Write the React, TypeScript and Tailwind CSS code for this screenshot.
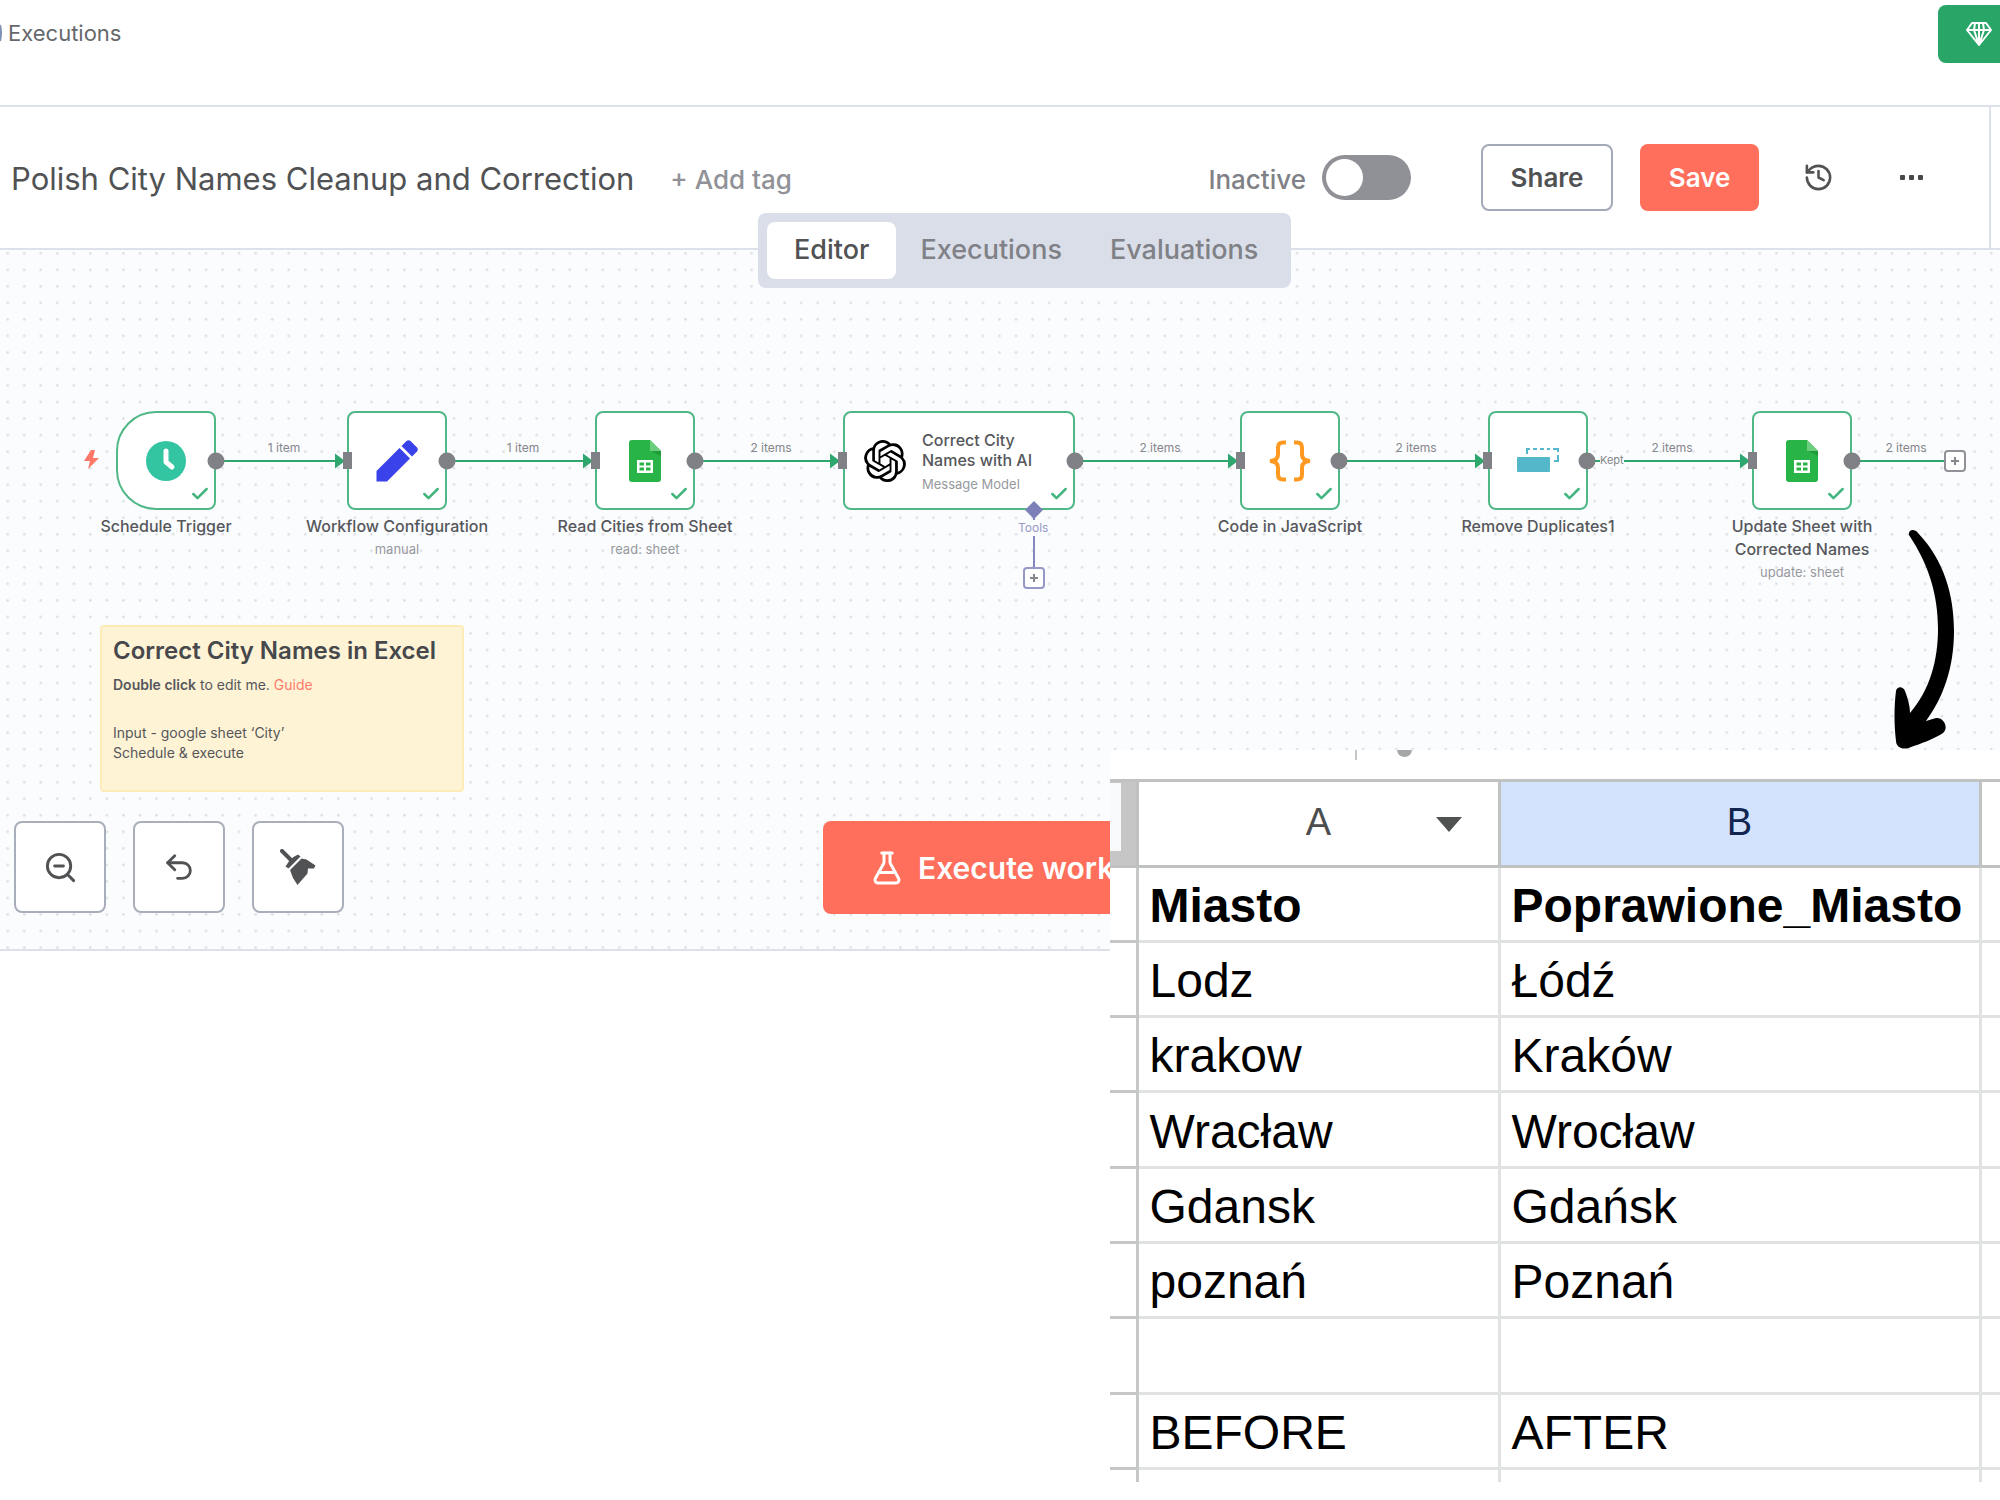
import type { ReactNode } from "react";
import { Check, FlaskConical, History, Undo2, ZoomOut } from "lucide-react";
import { SiOpenai } from "react-icons/si";

type FlowNode = {
  id: string;
  x: number;
  name: string;
  detail?: string;
  trigger?: boolean;
  icon: ReactNode;
};

type Edge = { from: number; to: number; label: string; labelX: number };

function ClockIcon() {
  return (
    <svg width="42" height="42" viewBox="0 0 42 42" aria-hidden="true">
      <circle cx="21" cy="21" r="20" fill="#33c4a1" />
      <path d="M21 11v11l6 5" fill="none" stroke="#fff" strokeWidth="5" strokeLinecap="round" strokeLinejoin="round" />
    </svg>
  );
}

function PencilIcon() {
  return (
    <svg width="42" height="42" viewBox="0 0 42 42" aria-hidden="true" fill="#3a42e9">
      <path d="M.5 41.500V31L23.500 8 34 18.500 11 41.500z" />
      <path d="M25.500 6l5-5q2-1.500 4 0l6.500 6.500q1.500 2 0 4l-5 5z" />
    </svg>
  );
}

function SheetsIcon() {
  return (
    <svg width="32" height="42" viewBox="0 0 32 42" aria-hidden="true">
      <path d="M3 0h18l11 11v28a3 3 0 0 1-3 3H3a3 3 0 0 1-3-3V3a3 3 0 0 1 3-3z" fill="#28b446" />
      <path d="M21 0l11 11H21z" fill="#6ace7c" />
      <path d="M22 11h10v5z" fill="#219b3a" />
      <rect x="8" y="20" width="16" height="13" fill="#fff" />
      <path d="M10.500 22.500h4.500v3h-4.500zM17 22.500h4.500v3H17zM10.500 27.500h4.500v3h-4.500zM17 27.500h4.500v3H17z" fill="#28b446" />
    </svg>
  );
}

function BracesIcon() {
  return (
    <svg width="42" height="42" viewBox="0 0 42 42" aria-hidden="true" fill="none" stroke="#ff9922" strokeWidth="4">
      <path d="M17 2.500h-3q-5 0-5 5v7q0 6-8 6.500 8 .5 8 6.500v7q0 5 5 5h3" />
      <path d="M25 2.500h3q5 0 5 5v7q0 6 8 6.500-8 .5-8 6.500v7q0 5-5 5h-3" />
    </svg>
  );
}

function DuplicatesIcon() {
  return (
    <svg width="42" height="42" viewBox="0 0 42 42" aria-hidden="true">
      <rect x="0" y="17" width="33" height="15" rx="1" fill="#55b7ca" />
      <path d="M10 14v-5h3M16 9h4M23 9h4M30 9h3M36 9h5v3M41 15v6h-4" fill="none" stroke="#55b7ca" strokeWidth="2" />
    </svg>
  );
}

function GemIcon() {
  return (
    <svg width="26" height="26" viewBox="0 0 26 26" aria-hidden="true" fill="none" stroke="#fff" strokeWidth="2" strokeLinejoin="round">
      <path d="M6 2h14l5 7-12 15L1 9zM1 9h24M9 2L8 9l5 15 5-15-1-7M13 2v22" />
    </svg>
  );
}

function MoreIcon() {
  return (
    <svg width="31" height="31" viewBox="0 0 31 31" aria-hidden="true" fill="#46484a">
      <rect x="4" y="13" width="5" height="5" rx="1" />
      <rect x="13" y="13" width="5" height="5" rx="1" />
      <rect x="22" y="13" width="5" height="5" rx="1" />
    </svg>
  );
}

function BroomIcon() {
  return (
    <svg width="36" height="37" viewBox="0 0 36 37" aria-hidden="true" fill="#505254">
      <path d="M2 2l10 10" stroke="#505254" strokeWidth="4" strokeLinecap="round" />
      <path d="M5.500 17.500l4-6 4-3.500 4.500-2.500 2.500 2L8.500 19.500z" />
      <path d="M10 21L21.500 9.500l5 1L35.500 16.500 34 19.500l-6 0-.5 5L17.500 36l-4.500-7z" />
    </svg>
  );
}

const nodes: FlowNode[] = [
  { id: "trigger", x: 116, name: "Schedule Trigger", trigger: true, icon: <ClockIcon /> },
  { id: "config", x: 347, name: "Workflow Configuration", detail: "manual", icon: <PencilIcon /> },
  { id: "read", x: 595, name: "Read Cities from Sheet", detail: "read: sheet", icon: <SheetsIcon /> },
  { id: "code", x: 1240, name: "Code in JavaScript", icon: <BracesIcon /> },
  { id: "dedupe", x: 1488, name: "Remove Duplicates1", icon: <DuplicatesIcon /> },
  { id: "update", x: 1752, name: "Update Sheet with Corrected Names", detail: "update: sheet", icon: <SheetsIcon /> },
];

const edges: Edge[] = [
  { from: 216, to: 343, label: "1 item", labelX: 284 },
  { from: 447, to: 591, label: "1 item", labelX: 523 },
  { from: 695, to: 838, label: "2 items", labelX: 771 },
  { from: 1075, to: 1236, label: "2 items", labelX: 1160 },
  { from: 1339, to: 1483, label: "2 items", labelX: 1416 },
  { from: 1587, to: 1748, label: "2 items", labelX: 1672 },
];

const rows = [
  ["Lodz", "Łódź"],
  ["krakow", "Kraków"],
  ["Wracław", "Wrocław"],
  ["Gdansk", "Gdańsk"],
  ["poznań", "Poznań"],
  ["", ""],
  ["BEFORE", "AFTER"],
];

function SuccessMark() {
  return <Check className="absolute right-1 bottom-1 size-5 text-[#45b57f]" strokeWidth={3} aria-hidden="true" />;
}

function NodeCard({ node }: { node: FlowNode }) {
  return (
    <div className="absolute top-[161px] flex w-[100px] flex-col items-center" style={{ left: node.x }}>
      <div
        className={
          node.trigger
            ? "relative flex h-[99px] w-[100px] items-center justify-center rounded-l-[40px] rounded-r-lg border-2 border-[#4fb886] bg-white"
            : "relative flex h-[99px] w-[100px] items-center justify-center rounded-lg border-2 border-[#4fb886] bg-white"
        }
      >
        {node.icon}
        <SuccessMark />
      </div>
      <div className="mt-[5px] w-48 text-center text-base leading-[23px] font-medium text-[#55575b]">{node.name}</div>
      {node.detail && <div className="w-48 text-center text-[13px] leading-[23px] text-[#97999e]">{node.detail}</div>}
    </div>
  );
}

function EdgeLabel({ x, children }: { x: number; children: ReactNode }) {
  return (
    <span
      className="absolute top-[190px] w-16 -translate-x-1/2 text-center text-xs leading-4 text-[#85878c]"
      style={{ left: x }}
    >
      {children}
    </span>
  );
}

function Connections() {
  return (
    <svg className="absolute inset-0 size-full" aria-hidden="true">
      <g stroke="#2fa66d" strokeWidth="2">
        {edges.map((e) => (
          <path key={e.from} d={`M${e.from} 211H${e.to}`} />
        ))}
        <path d="M1852 211H1945" />
      </g>
      <path d="M1034 260v58" stroke="#8587bf" strokeWidth="2" />
    </svg>
  );
}

function Ports() {
  return (
    <svg className="pointer-events-none absolute inset-0 size-full" aria-hidden="true">
      {edges.map((e) => (
        <g key={e.from}>
          <circle cx={e.from} cy="211" r="8.500" fill="#7f8186" />
          <path d={`M${e.to - 8} 203.500l10 7.500-10 7.500z`} fill="#2fa66d" />
          <rect x={e.to} y="202" width="9" height="17" fill="#7f8186" />
        </g>
      ))}
      <circle cx="1852" cy="211" r="8.500" fill="#7f8186" />
      <path d="M1034 251l9 9-9 9-9-9z" fill="#7d80b8" />
      <path d="M91 200l-7 11h6l-2 8 11-11h-6l2-8z" fill="#ff7766" />
    </svg>
  );
}

function Canvas() {
  return (
    <main className="relative h-[701px] overflow-hidden border-b-2 border-[#dde1ea] bg-[#fbfcfe]">
      <svg className="absolute inset-0 size-full" aria-hidden="true">
        <defs>
          <pattern id="dots" x="-0.500" y="-4.900" width="16.530" height="16.530" patternUnits="userSpaceOnUse">
            <circle cx="8.200" cy="8.200" r="1.300" fill="#dcdee3" />
          </pattern>
        </defs>
        <rect width="100%" height="100%" fill="url(#dots)" />
      </svg>

      <Connections />
      {nodes.map((n) => (
        <NodeCard key={n.id} node={n} />
      ))}

      <div className="absolute top-[161px] left-[843px] flex h-[99px] w-[232px] items-center gap-4 rounded-lg border-2 border-[#4fb886] bg-white pl-[19px]">
        <SiOpenai className="size-[42px] shrink-0 text-black" aria-hidden="true" />
        <div className="pt-0.5">
          <div className="text-base leading-5 font-medium text-[#55575b]">
            Correct City
            <br />
            Names with AI
          </div>
          <div className="mt-1 text-[13px] leading-5 text-[#97999e]">Message Model</div>
        </div>
        <SuccessMark />
      </div>
      <Ports />

      {edges.map((e) => (
        <EdgeLabel key={e.from} x={e.labelX}>
          {e.label}
        </EdgeLabel>
      ))}
      <EdgeLabel x={1906}>2 items</EdgeLabel>
      <span className="absolute top-[202px] left-[1600px] bg-[#fbfcfe] text-[11px] leading-4 text-[#85878c]">Kept</span>
      <span className="absolute top-[270px] left-[1018px] bg-[#fbfcfe] text-xs leading-4 text-[#9698c8]">Tools</span>

      <button
        type="button"
        aria-label="Add tool"
        className="absolute top-[317px] left-[1023px] flex size-[22px] items-center justify-center rounded border-2 border-[#9698c8] bg-white"
      >
        <svg width="10" height="10" viewBox="0 0 10 10" stroke="#85878c" strokeWidth="2" aria-hidden="true">
          <path d="M5 1v8M1 5h8" />
        </svg>
      </button>
      <button
        type="button"
        aria-label="Add node"
        className="absolute top-[200px] left-[1944px] flex size-[22px] items-center justify-center rounded border-2 border-[#909297] bg-white"
      >
        <svg width="10" height="10" viewBox="0 0 10 10" stroke="#85878c" strokeWidth="2" aria-hidden="true">
          <path d="M5 1v8M1 5h8" />
        </svg>
      </button>

      <section className="absolute top-[375px] left-[100px] h-[167px] w-[364px] rounded border-2 border-[#fdebb8] bg-[#fff3d5] px-[11px] pt-2 text-sm leading-5 text-[#55575b]">
        <h2 className="text-2xl leading-8 font-semibold whitespace-nowrap text-[#46484c]">Correct City Names in Excel</h2>
        <p className="mt-2">
          <strong className="font-semibold">Double click</strong> to edit me.{" "}
          <a href="#guide" className="text-[#ff7b6b]">
            Guide
          </a>
        </p>
        <p className="mt-7">
          Input - google sheet ‘City’
          <br />
          Schedule &amp; execute
        </p>
      </section>

      <div className="absolute bottom-9 left-[14px] flex gap-[27px]">
        <ControlButton label="Zoom out">
          <ZoomOut size={35} strokeWidth={2} />
        </ControlButton>
        <ControlButton label="Undo">
          <Undo2 size={34} strokeWidth={2} />
        </ControlButton>
        <ControlButton label="Tidy up">
          <BroomIcon />
        </ControlButton>
      </div>

      <button
        type="button"
        className="absolute bottom-[35px] left-[823px] flex h-[93px] items-center gap-[13px] rounded-lg bg-[#ff6f5c] px-[46px] text-3xl font-semibold whitespace-nowrap text-white"
      >
        <FlaskConical size={36} strokeWidth={2} aria-hidden="true" />
        Execute workflow
      </button>
    </main>
  );
}

function ControlButton({ label, children }: { label: string; children: ReactNode }) {
  return (
    <button
      type="button"
      aria-label={label}
      className="flex size-[92px] items-center justify-center rounded-lg border-2 border-[#a9aebb] bg-white text-[#505254]"
    >
      {children}
    </button>
  );
}

function Sheet() {
  return (
    <section className="absolute top-[750px] right-0 h-[732px] w-[890px] overflow-hidden bg-white font-['Liberation_Sans',Arial,sans-serif]">
      <svg className="block h-[29px] w-full" aria-hidden="true">
        <path d="M246 0v10" stroke="#c4c6c7" strokeWidth="2" />
        <path d="M287 0h15q-1 7-7.500 7T287 0z" fill="#a5a7a7" />
      </svg>
      <table className="w-full table-fixed border-collapse text-left text-5xl text-black">
        <colgroup>
          <col className="w-[27px]" />
          <col className="w-[362px]" />
          <col className="w-[481px]" />
          <col />
        </colgroup>
        <thead>
          <tr className="h-[86px] border-y-3 border-[#c0c2c2] text-[38px]">
            <th className="border-r-3 border-[#c0c2c2] bg-[#c6c6c6] p-0">
              <div className="mb-3.5 h-[68px] w-[11px] bg-[#f8f9fa]" />
            </th>
            <th scope="col" className="border-r-3 border-[#c0c2c2] p-0 pb-1 leading-none font-normal text-[#4b4e4d]">
              <div className="flex items-center justify-end pr-9">
                <span className="w-7 text-center">A</span>
                <button type="button" aria-label="Column A menu" className="ml-[103px] pt-1">
                  <svg width="26" height="16" viewBox="0 0 26 16" fill="#505252" aria-hidden="true">
                    <path d="M0 1h26L13 16z" />
                  </svg>
                </button>
              </div>
            </th>
            <th scope="col" className="border-r-3 border-[#c0c2c2] bg-[#d3e2fd] p-0 pb-1 text-center leading-none font-normal text-[#10254f]">
              B
            </th>
            <th className="p-0" />
          </tr>
          <tr className="h-[75px] border-b-3 border-[#e1e2e2]">
            <td className="border-r-3 border-b-3 border-[#c6c8c8] p-0" />
            <th scope="col" className="border-r-3 border-[#e1e2e2] pt-1 pr-0 pb-0 pl-[11px] leading-[68px] font-bold">
              Miasto
            </th>
            <th scope="col" className="border-r-3 border-[#e1e2e2] pt-1 pr-0 pb-0 pl-[11px] leading-[68px] font-bold">
              Poprawione_Miasto
            </th>
            <td />
          </tr>
        </thead>
        <tbody>
          {rows.map(([before, after], i) => (
            <tr key={i} className="h-[75px] border-b-3 border-[#e1e2e2] nth-[3n]:h-[76px]">
              <td className="border-r-3 border-b-3 border-[#c6c8c8] p-0" />
              <td className="border-r-3 border-[#e1e2e2] pt-1 pr-0 pb-0 pl-[11px] leading-[68px]">{before}</td>
              <td className="border-r-3 border-[#e1e2e2] pt-1 pr-0 pb-0 pl-[11px] leading-[68px]">{after}</td>
              <td />
            </tr>
          ))}
          <tr className="h-[75px]">
            <td className="border-r-3 border-[#c6c8c8] p-0" />
            <td className="border-r-3 border-[#e1e2e2]" />
            <td className="border-r-3 border-[#e1e2e2]" />
            <td />
          </tr>
        </tbody>
      </table>
    </section>
  );
}

export default function App() {
  return (
    <div className="relative min-h-screen overflow-hidden bg-white font-[Inter,sans-serif] text-[#505254]">
      <nav className="flex h-[107px] items-start justify-between border-b-2 border-[#dde1ea]">
        <a href="#executions" className="flex h-[66px] items-center gap-1.5 text-[22px] text-[#66686c]">
          <svg width="2" height="20" viewBox="0 0 2 20" fill="none" stroke="#7d90b5" strokeWidth="2" aria-hidden="true">
            <path d="M0 2q2 8 0 16" />
          </svg>
          Executions
        </a>
        <button type="button" aria-label="Upgrade" className="mt-[5px] flex h-[58px] w-[62px] items-center rounded-l-lg bg-[#2aa568] pl-7">
          <GemIcon />
        </button>
      </nav>

      <header className="flex h-[143px] border-b-2 border-[#dde1ea]">
        <div className="flex grow items-center border-r-2 border-[#dde1ea] pr-[62px] pl-[11px]">
          <h1 className="pt-1 text-[31px] whitespace-nowrap">Polish City Names Cleanup and Correction</h1>
          <button type="button" className="ml-9 pt-1 text-[26px] font-medium whitespace-nowrap text-[#909298]">
            + Add tag
          </button>
          <div className="ml-auto flex items-center">
            <label htmlFor="active" className="pt-1 text-[26px] font-medium text-[#7f8186]">
              Inactive
            </label>
            <input
              id="active"
              type="checkbox"
              role="switch"
              className="ml-4 h-[45px] w-[89px] appearance-none rounded-full bg-[#909197] p-1 before:block before:size-[37px] before:rounded-full before:bg-white"
            />
            <button type="button" className="ml-[70px] h-[67px] w-[132px] rounded-lg border-2 border-[#a3a9b7] text-[26px] font-semibold">
              Share
            </button>
            <button type="button" className="ml-[27px] h-[67px] w-[119px] rounded-lg bg-[#ff6f5c] text-[26px] font-semibold text-white">
              Save
            </button>
            <button type="button" aria-label="Version history" className="ml-11">
              <History size={31} strokeWidth={2} />
            </button>
            <button type="button" aria-label="More options" className="ml-[62px]">
              <MoreIcon />
            </button>
          </div>
        </div>
        <div className="w-[9px]" />
      </header>

      <div
        role="tablist"
        className="absolute top-[213px] left-[758px] z-10 flex h-[75px] items-center rounded-lg bg-[#dadee9] px-[9px] text-[27px] font-medium text-[#7f8186]"
      >
        <button type="button" role="tab" aria-selected="true" className="h-[57px] rounded-lg bg-white px-[27px] text-[#505254]">
          Editor
        </button>
        <button type="button" role="tab" aria-selected="false" className="h-[57px] px-6">
          Executions
        </button>
        <button type="button" role="tab" aria-selected="false" className="h-[57px] px-6">
          Evaluations
        </button>
      </div>

      <Canvas />
      <Sheet />

      <svg className="absolute top-[528px] right-[44px] z-10" width="64" height="222" viewBox="1892 528 64 222" aria-hidden="true">
        <path d="M1909 535C1908 530 1914 528 1918 533C1944 560 1954 595 1954 631C1954 668 1943 698 1926 721L1936 718C1944 717 1949 728 1943 733C1934 739 1920 744 1911 747C1903 751 1896 747 1896 741C1894 725 1894 706 1896 691C1897 686 1903 686 1905 691C1908 699 1910 706 1910 713C1930 690 1938 660 1938 629C1938 595 1929 565 1909 535Z" />
      </svg>
    </div>
  );
}
